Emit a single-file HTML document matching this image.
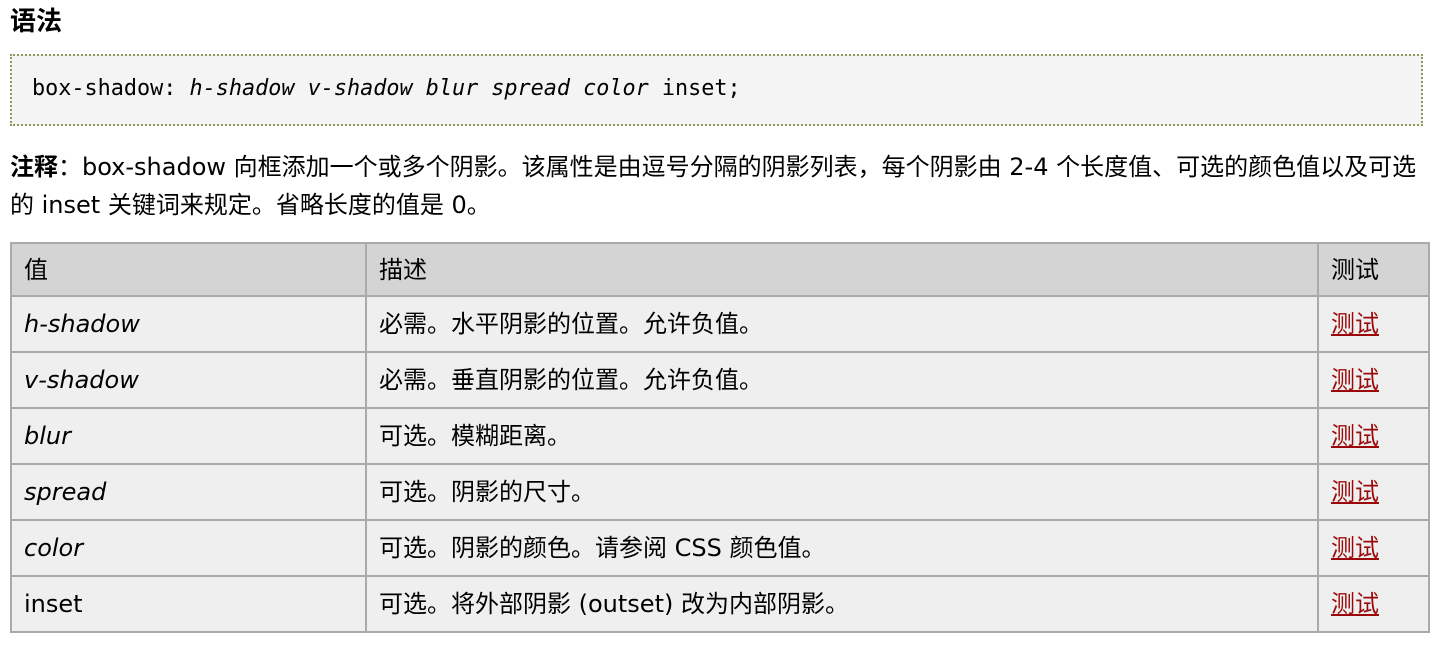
<!DOCTYPE html>
<html><head><meta charset="utf-8"><style>
body{margin:0;background:#fff;font-family:"DejaVu Sans","Noto Sans CJK SC",sans-serif;color:#000;}
h2{position:absolute;left:10px;top:4px;margin:0;font-size:26px;font-weight:bold;line-height:36px;}
.code{position:absolute;left:10px;top:54px;width:1409px;height:68px;border:2px dotted #8a9a5b;background:#f4f4f4;}
.code span.t{position:absolute;left:20px;top:20px;line-height:26px;font-family:"DejaVu Sans Mono","Liberation Mono",monospace;font-size:21.8px;}
p{position:absolute;left:10px;top:148px;width:1430px;margin:0;font-size:24px;line-height:38px;white-space:nowrap;}
table{position:absolute;left:10px;top:242px;width:1420px;border-collapse:collapse;font-size:24px;}
td,th{border:2px solid #aaa;padding:0 12px;text-align:left;background:#efefef;height:54px;line-height:28px;vertical-align:middle;}
th{background:#d4d4d4;font-weight:normal;height:51px;}
a{color:#9b0a0a;text-decoration:underline;}
</style></head><body>
<h2>语法</h2>
<div class="code"><span class="t">box-shadow: <i>h-shadow v-shadow blur spread color</i> inset;</span></div>
<p><b>注释</b>：box-shadow 向框添加一个或多个阴影。该属性是由逗号分隔的阴影列表，每个阴影由 2-4 个长度值、可选的颜色值以及可选<br>的 inset 关键词来规定。省略长度的值是 0。</p>
<table>
<tr><th style="width:329px">值</th><th style="width:926px">描述</th><th>测试</th></tr>
<tr><td><i>h-shadow</i></td><td>必需。水平阴影的位置。允许负值。</td><td><a>测试</a></td></tr>
<tr><td><i>v-shadow</i></td><td>必需。垂直阴影的位置。允许负值。</td><td><a>测试</a></td></tr>
<tr><td><i>blur</i></td><td>可选。模糊距离。</td><td><a>测试</a></td></tr>
<tr><td><i>spread</i></td><td>可选。阴影的尺寸。</td><td><a>测试</a></td></tr>
<tr><td><i>color</i></td><td>可选。阴影的颜色。请参阅 CSS 颜色值。</td><td><a>测试</a></td></tr>
<tr><td>inset</td><td>可选。将外部阴影 (outset) 改为内部阴影。</td><td><a>测试</a></td></tr>
</table>
</body></html>
